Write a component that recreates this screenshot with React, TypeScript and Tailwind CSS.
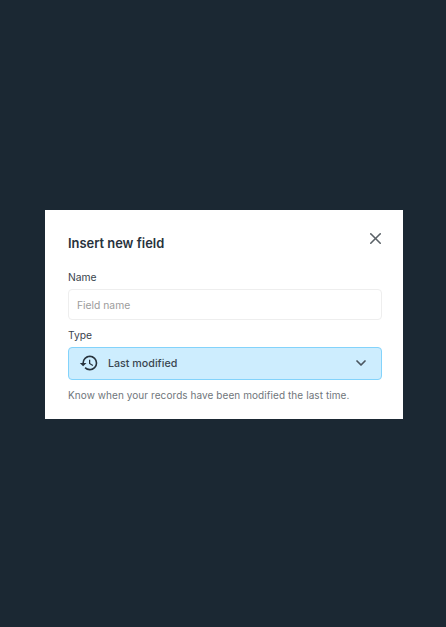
import { ChevronDown, X } from "lucide-react";
import { MdHistory } from "react-icons/md";

export default function App() {
  return (
    <div className="h-screen bg-[#1b2833] flex items-center justify-center pl-[2px] pt-[2px] font-['Inter',sans-serif]">
      {/* Modal */}
      <div className="relative w-[358px] h-[209px] bg-white px-[23px] pt-[26px]">
        <button className="absolute right-[18px] top-[19px] text-[#5a6167]">
          <X className="w-[19px] h-[19px]" strokeWidth={2} />
        </button>

        <h2 className="text-[12.9px] leading-4 font-semibold text-[#27323c]">Insert new field</h2>

        <label className="block mt-[18px] text-[10.3px] leading-[14px] font-normal text-[#3a444d]">Name</label>
        <input
          type="text"
          placeholder="Field name"
          className="mt-[5px] block w-[314px] h-[31px] px-[8px] rounded-[4px] border border-[#eeeeee] bg-white text-[10.3px] placeholder-[#9c9c9c] outline-none"
        />

        <label className="block mt-[8px] text-[10.3px] leading-[14px] font-normal text-[#3a444d]">Type</label>
        <div className="mt-[5px] w-[314px] h-[33px] pl-[10px] pr-[12px] flex items-center rounded-[4px] border-[1.5px] border-[#83d3fb] bg-[#cdedfe]">
          <MdHistory className="mb-[1px] w-[20px] h-[20px] text-[#27323c]" />
          <span className="ml-[9px] mt-[1px] text-[10.7px] leading-[14px] font-medium text-[#3a4650]">Last modified</span>
          <ChevronDown className="ml-auto mb-[1px] w-[16px] h-[16px] text-[#4b565f]" strokeWidth={2.6} />
        </div>

        <p className="mt-[8px] text-[10px] tracking-[0.07px] leading-[14px] text-[#70767b]">
          Know when your records have been modified the last time.
        </p>
      </div>
    </div>
  );
}
